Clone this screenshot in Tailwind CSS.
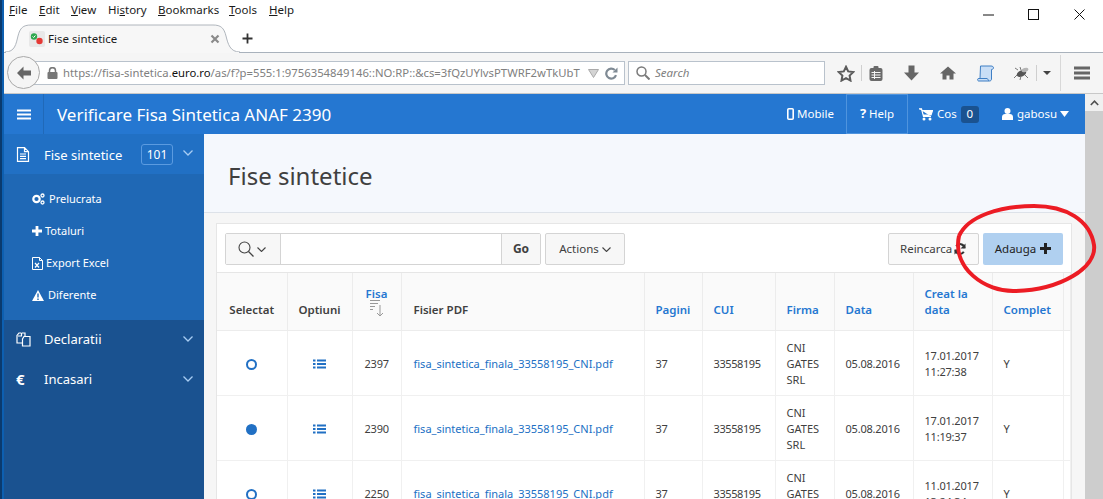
<!DOCTYPE html>
<html lang="en">
  <head>
    <meta charset="UTF-8" />
    <title>Fise sintetice</title>
    <script src="https://cdn.jsdelivr.net/npm/@tailwindcss/browser@4"></script>
  </head>
  <body class="bg-white overflow-hidden">
    <div class="relative w-[1103px] h-[499px] overflow-hidden flex bg-white [font-family:'Noto_Sans',sans-serif] text-[#404040]">
      <!-- desktop edge -->
      <div class="w-[4px] shrink-0 bg-[#0d5fb0] border-l-2 border-[#0a3a6e]"></div>

      <div class="flex-1 flex flex-col min-w-0">
        <!-- menu bar -->
        <div class="h-[18px] flex items-start pl-[5px] pt-[1px] text-[11.5px] leading-[17px] text-[#1a1a1a] relative">
          <span class="w-[30px]"><u>F</u>ile</span>
          <span class="w-[32px]"><u>E</u>dit</span>
          <span class="w-[37px]"><u>V</u>iew</span>
          <span class="w-[50px]">Hi<u>s</u>tory</span>
          <span class="w-[71px]"><u>B</u>ookmarks</span>
          <span class="w-[40px]"><u>T</u>ools</span>
          <span><u>H</u>elp</span>
        </div>

        <!-- tab strip -->
        <div class="h-[35px] relative border-b border-[#a9b2bc] flex items-end">
          <div class="absolute left-[1px] top-[6px] w-[235px] h-[30px]">
            <svg width="235" height="30" viewBox="0 0 235 30" class="absolute inset-0"><path d="M0 28 C10 28 11 20 13 12 C15 4 18 1 26 1 L208 1 C216 1 219 4 221 12 C223 20 225 28 235 28" fill="#f7f7f7" stroke="#b0b6bd"/><path d="M1 29 L234 29" stroke="#f7f7f7" stroke-width="2"/></svg>
            <div class="absolute left-[24px] top-[7px] w-[16px] h-[16px] bg-[#e8e8e8] rounded-[2px]">
              <svg width="16" height="16" viewBox="0 0 16 16"><circle cx="5" cy="5.5" r="3.2" fill="#2fa84f"/><circle cx="10.5" cy="10" r="3.2" fill="#e53935"/><path d="M3.6 5.5l1 1 1.8-2" stroke="#fff" fill="none"/></svg>
            </div>
            <span class="absolute left-[43px] top-[6px] text-[11.5px] leading-[18px] text-[#1a1a1a]">Fise sintetice</span>
            <svg class="absolute left-[205px] top-[10px]" width="10" height="10" viewBox="0 0 10 10"><path d="M1.5 1.5l7 7M8.5 1.5l-7 7" stroke="#8a8a8a" stroke-width="2.2"/></svg>
          </div>
          <svg class="absolute left-[238px] top-[15px]" width="11" height="11" viewBox="0 0 11 11"><path d="M5.5 0.5v10M0.5 5.500h10" stroke="#333" stroke-width="1.800"/></svg>
          <!-- window controls -->
          <svg class="absolute left-[979px] top-[-4px]" width="11" height="2" viewBox="0 0 11 2"><path d="M0 1h11" stroke="#111"/></svg>
          <svg class="absolute left-[1024px] top-[-9px]" width="11" height="11" viewBox="0 0 11 11"><rect x="0.500" y="0.500" width="10" height="10" fill="none" stroke="#111"/></svg>
          <svg class="absolute left-[1070px] top-[-9px]" width="11" height="11" viewBox="0 0 11 11"><path d="M0.500 0.500l10 10M10.500 0.500l-10 10" stroke="#111"/></svg>
        </div>

        <!-- nav toolbar -->
        <div class="h-[41px] shrink-0 bg-[#f5f5f5] border-b border-[#c8c8c8] flex items-center relative">
          <div class="ml-[17px] w-[604px] h-[24px] bg-white border border-[#b9c2cc] flex items-center pl-[25px] pr-[5px] text-[11.3px] text-[#808080] whitespace-nowrap overflow-hidden">
            <svg class="shrink-0" width="11" height="12" viewBox="0 0 11 12"><path d="M2.500 5.500V3.700a3 3 0 0 1 6 0v1.800" fill="none" stroke="#777" stroke-width="1.500"/><rect x="0.500" y="5" width="10" height="7" rx="1" fill="#777"/></svg>
            <span class="ml-[5px] w-[520px] shrink-0">https://fisa-sintetica.<span class="text-[#111]">euro.ro</span>/as/f?p=555:1:9756354849146::NO:RP::&amp;cs=3fQzUYlvsPTWRF2wTkUbT</span>
            <svg class="ml-[5px] shrink-0" width="11" height="9" viewBox="0 0 11 9"><path d="M0.500 0.500h10L5.500 8.500z" fill="#d4d4d4" stroke="#aaa"/></svg>
            <svg class="ml-[6px] shrink-0" width="13" height="13" viewBox="0 0 13 13"><path d="M11 8.200A5 5 0 1 1 9.800 3" fill="none" stroke="#7f8a94" stroke-width="2.200"/><path d="M12.500 0.500v5h-5z" fill="#7f8a94"/></svg>
          </div>
          <div class="absolute left-[3px] top-[3px] w-[33px] h-[33px] rounded-full bg-[#f5f5f5] border border-[#a9a9a9] flex items-center justify-center">
            <svg width="16" height="14" viewBox="0 0 16 14"><path d="M7.500 0.500L1 7l6.500 6.500V9.500H15v-5H7.500z" fill="#666"/></svg>
          </div>
          <div class="ml-[3px] w-[197px] h-[24px] bg-white border border-[#b9c2cc] flex items-center pl-[7px] text-[11.5px] italic text-[#808080]">
            <svg width="14" height="14" viewBox="0 0 14 14"><circle cx="5.500" cy="5.500" r="4.500" fill="none" stroke="#7a7a7a" stroke-width="1.500"/><path d="M9 9l4.500 4.500" stroke="#7a7a7a" stroke-width="2"/></svg>
            <span class="ml-[5px]">Search</span>
          </div>
          <div class="flex items-center ml-[12px]">
            <svg width="18" height="17" viewBox="0 0 18 17"><path d="M9 1.800l2.200 4.600 5 .7-3.600 3.500.9 5L9 13.200l-4.500 2.400.9-5-3.600-3.500 5-.7z" fill="none" stroke="#5c5c5c" stroke-width="2"/></svg>
            <div class="w-px h-[16px] bg-[#cfcfcf] ml-[6px]"></div>
            <svg class="ml-[7px]" width="14" height="15" viewBox="0 0 14 15"><rect x="0.500" y="2" width="13" height="13" rx="2" fill="#6a6a6a"/><rect x="4.500" y="0" width="5" height="3.500" rx="1" fill="#6a6a6a"/><path d="M2.500 6.500h9M2.500 9h9M2.500 11.500h9M5.500 5v8" stroke="#f5f5f5" stroke-width="1"/></svg>
            <svg class="ml-[21px]" width="15" height="16" viewBox="0 0 15 16"><path d="M4.500 0.500h6v7H15L7.500 15.500 0 7.500h4.500z" fill="#666"/></svg>
            <svg class="ml-[21px]" width="16" height="14" viewBox="0 0 16 14"><path d="M8 0.500L0 7.500h2.500v6h4v-4h3v4h4v-6H16z" fill="#666"/></svg>
            <svg class="ml-[21px]" width="17" height="17" viewBox="0 0 17 17"><path d="M3.500 1h10.500c1.300 0 2.500 .6 2.500 1.800 0 1-.8 1.700-2 1.700V14c0 1.200-.8 2-2 2H1.500C.5 16 .2 13.500 1.500 13.500H3z" fill="#c9def6" stroke="#3f7fc4"/><path d="M1.500 13.500h8.500c.8 0 1 1.500 2 2.500" fill="none" stroke="#3f7fc4"/></svg>
            <svg class="ml-[19px]" width="17" height="13" viewBox="0 0 17 13"><ellipse cx="8.500" cy="6.500" rx="5" ry="3" fill="#555" transform="rotate(-25 8.500 6.500)"/><path d="M5 3l-3 -2M4 8L1 11M8 9l-1 4M12 8l3 3M14 2l-3 3M8 3L7 0" stroke="#777"/><ellipse cx="12" cy="3" rx="3.500" ry="2" fill="#b5b5b5" transform="rotate(-20 12 3)"/></svg>
            <div class="w-px h-[16px] bg-[#cfcfcf] ml-[6px]"></div>
            <svg class="ml-[6px]" width="8" height="4" viewBox="0 0 8 4"><path d="M0 0h8L4 4z" fill="#444"/></svg>
            <div class="w-px h-[36px] bg-[#d8d8d8] ml-[9px]"></div>
            <svg class="ml-[13px]" width="16" height="14" viewBox="0 0 16 14"><path d="M0 2h16M0 7h16M0 12h16" stroke="#666" stroke-width="3"/></svg>
          </div>
        </div>

        <!-- app -->
        <div class="flex-1 flex min-h-0">
          <div class="w-[1081px] flex flex-col min-w-0">
            <!-- app header -->
            <div class="h-[40px] shrink-0 bg-[#2577d1] flex items-stretch text-white text-[11.5px]">
              <div class="w-[40px] border-r border-[#2069b8] flex items-center pl-[13px]">
                <svg width="14" height="11" viewBox="0 0 14 11"><path d="M0 1.500h14M0 5.500h14M0 9.500h14" stroke="#fff" stroke-width="2"/></svg>
              </div>
              <div class="pl-[13px] flex items-center text-[17px] leading-none w-[743px] whitespace-nowrap">Verificare Fisa Sintetica ANAF 2390</div>
              <div class="flex items-center w-[59px]">
                <svg width="7" height="12" viewBox="0 0 7 12"><rect x="0.800" y="0.800" width="5.400" height="10.400" rx="1" fill="none" stroke="#fff" stroke-width="1.600"/></svg>
                <span class="ml-[3px]">Mobile</span>
              </div>
              <div class="w-[62px] border border-[#4f94de] flex items-center justify-center">
                <span class="font-bold text-[13px] mr-[3px]">?</span><span>Help</span>
              </div>
              <div class="flex items-center ml-[11px] w-[83px]">
                <svg width="14" height="13" viewBox="0 0 14 13"><path d="M0 0.800h2.500l2 7.700h7.500M3 2.500h10.500l-1.500 4.500H4.300" fill="#fff" stroke="#fff" stroke-width="1.200"/><circle cx="5" cy="11" r="1.500" fill="#fff"/><circle cx="11" cy="11" r="1.500" fill="#fff"/></svg>
                <span class="ml-[4px]">Cos</span>
                <span class="ml-[4px] w-[18px] h-[17px] bg-[#1a5290] rounded-[3px] flex items-center justify-center">0</span>
              </div>
              <div class="flex items-center">
                <svg width="11" height="12" viewBox="0 0 11 12"><circle cx="5.500" cy="3" r="3" fill="#fff"/><path d="M0 12V9c0-2 1.500-3 3-3h5c1.500 0 3 1 3 3v3z" fill="#fff"/></svg>
                <span class="ml-[4px]">gabosu</span>
                <svg class="ml-[3px]" width="9" height="6" viewBox="0 0 9 6"><path d="M0 0h9L4.500 6z" fill="#fff"/></svg>
              </div>
            </div>

            <div class="flex-1 flex min-h-0">
              <!-- sidebar -->
              <div class="w-[200px] shrink-0 bg-[#1a5290] text-white text-[11px]">
                <div class="h-[40px] bg-[#2170c4] flex items-center pl-[12px] relative">
                  <svg width="14" height="15" viewBox="0 0 14 15"><path d="M1.500 0.700h7l4 4v9.600h-11zM8.500 0.700v4h4M4 7h6M4 9.300h6M4 11.600h6" fill="none" stroke="#fff" stroke-width="1.200"/></svg>
                  <span class="ml-[14px] mt-[3px] text-[13px]">Fise sintetice</span>
                  <span class="absolute left-[137px] top-[10px] w-[32px] h-[21px] border border-[#5b9be0] rounded-[3px] flex items-center justify-center text-[12px]">101</span>
                  <svg class="absolute left-[179px] top-[16px]" width="10" height="6" viewBox="0 0 10 6"><path d="M0.500 0.500L5 5l4.500-4.500" fill="none" stroke="#a8cdf3" stroke-width="1.300"/></svg>
                </div>
                <div class="bg-[#1f68b5] py-[9px] pl-[28px]">
                  <div class="h-[32px] flex items-center">
                    <svg width="13" height="12" viewBox="0 0 13 12"><circle cx="4.500" cy="6" r="3.200" fill="none" stroke="#fff" stroke-width="2.200"/><circle cx="10.500" cy="2.500" r="1.500" fill="none" stroke="#fff" stroke-width="1.300"/><circle cx="10.500" cy="9.500" r="1.500" fill="none" stroke="#fff" stroke-width="1.300"/></svg>
                    <span class="ml-[4px]">Prelucrata</span>
                  </div>
                  <div class="h-[32px] flex items-center">
                    <svg width="10" height="10" viewBox="0 0 10 10"><path d="M5 0v10M0 5h10" stroke="#fff" stroke-width="2.800"/></svg>
                    <span class="ml-[3px]">Totaluri</span>
                  </div>
                  <div class="h-[32px] flex items-center">
                    <svg width="11" height="13" viewBox="0 0 11 13"><path d="M0.500 0.500h7l3 3v9h-10zM7.500 0.500v3h3" fill="none" stroke="#fff"/><path d="M3 6l4 4.500M7 6l-4 4.500" stroke="#fff" stroke-width="1.200"/></svg>
                    <span class="ml-[3px]">Export Excel</span>
                  </div>
                  <div class="h-[32px] flex items-center">
                    <svg width="12" height="11" viewBox="0 0 12 11"><path d="M6 0l6 11H0z" fill="#fff"/><path d="M6 3.500v4M6 8.500v1.500" stroke="#1f68b5" stroke-width="1.400"/></svg>
                    <span class="ml-[4px]">Diferente</span>
                  </div>
                </div>
                <div class="h-[40px] flex items-center pl-[12px] relative">
                  <svg class="mb-[2px]" width="15" height="15" viewBox="0 0 15 15"><path d="M5.500 1H3L1 3.500V11h5M5.500 1v3H2M8 4.500h6V14H6.500V7z" fill="none" stroke="#fff" stroke-width="1.200"/><path d="M6 1h3v3" fill="none" stroke="#fff" stroke-width="1.200"/></svg>
                  <span class="ml-[13px] text-[13px]">Declaratii</span>
                  <svg class="absolute left-[179px] top-[16px]" width="10" height="6" viewBox="0 0 10 6"><path d="M0.500 0.500L5 5l4.500-4.500" fill="none" stroke="#a8cdf3" stroke-width="1.300"/></svg>
                </div>
                <div class="h-[40px] flex items-center pl-[12px] relative">
                  <span class="w-[15px] font-bold text-[15px] leading-none mb-[2px]">€</span>
                  <span class="ml-[13px] text-[13px]">Incasari</span>
                  <svg class="absolute left-[179px] top-[16px]" width="10" height="6" viewBox="0 0 10 6"><path d="M0.500 0.500L5 5l4.500-4.500" fill="none" stroke="#a8cdf3" stroke-width="1.300"/></svg>
                </div>
              </div>

              <!-- main -->
              <div class="flex-1 min-w-0 bg-[#f6f6f6]">
                <div class="h-[79px] bg-[#f5f8fd] border-b border-[#dde2e9] flex items-center pl-[24px] pt-[5px] text-[24px] text-[#404040]">Fise sintetice</div>
                <div class="ml-[12px] mt-[10px] w-[856px] bg-white border border-[#e6e6e6] text-[11.5px]">
                  <!-- report toolbar -->
                  <div class="h-[49px] bg-white flex items-start pl-[8px] pt-[9px] border-b border-[#e6e6e6]">
                    <div class="flex h-[32px] w-[316px] border border-[#d4d4d4] rounded-[2px]">
                      <div class="w-[55px] bg-[#f7f7f7] border-r border-[#d4d4d4] flex items-center pl-[12px]">
                        <svg width="16" height="16" viewBox="0 0 16 16"><circle cx="6.500" cy="6.500" r="5.500" fill="none" stroke="#444" stroke-width="1.100"/><path d="M10.500 10.500L15.500 15.500" stroke="#444" stroke-width="1.300"/></svg>
                        <svg class="ml-[3px]" width="9" height="5" viewBox="0 0 9 5"><path d="M0.500 0.500l4 4 4-4" fill="none" stroke="#444" stroke-width="1.100"/></svg>
                      </div>
                      <div class="flex-1 bg-white"></div>
                      <div class="w-[39px] bg-[#f7f7f7] border-l border-[#d4d4d4] flex items-center justify-center font-bold text-[12px]">Go</div>
                    </div>
                    <div class="ml-[4px] w-[80px] h-[32px] bg-[#f7f7f7] border border-[#d4d4d4] rounded-[2px] flex items-center justify-center">
                      <span>Actions</span>
                      <svg class="ml-[3px]" width="9" height="5" viewBox="0 0 9 5"><path d="M0.500 0.500l4 4 4-4" fill="none" stroke="#444" stroke-width="1.100"/></svg>
                    </div>
                    <div class="ml-[263px] w-[91px] h-[32px] bg-[#f9f9f9] border border-[#d4d4d4] rounded-[2px] flex items-center pl-[11px]">
                      <span>Reincarca</span>
                      <svg class="ml-[2px]" width="12" height="12" viewBox="0 0 12 12"><path d="M10.500 5A4.500 4.500 0 0 0 2.200 3.300M1.500 7a4.500 4.500 0 0 0 8.300 1.700" fill="none" stroke="#333" stroke-width="2"/><path d="M11.500 0.500v5h-5zM0.500 11.500v-5h5z" fill="#333"/></svg>
                    </div>
                    <div class="ml-[4px] w-[80px] h-[32px] bg-[#b0d0f0] rounded-[2px] flex items-center justify-center text-[#222]">
                      <span>Adauga</span>
                      <svg class="ml-[4px] mb-[2px]" width="11" height="11" viewBox="0 0 11 11"><path d="M5.500 0v11M0 5.500h11" stroke="#222" stroke-width="3"/></svg>
                    </div>
                  </div>
                  <!-- report table -->
                  <table class="table-fixed border-collapse w-[854px]">
                    <colgroup>
                      <col class="w-[70px]" /><col class="w-[65px]" /><col class="w-[49px]" /><col class="w-[243px]" /><col class="w-[58px]" /><col class="w-[73px]" /><col class="w-[59px]" /><col class="w-[79px]" /><col class="w-[79px]" /><col class="w-[71px]" /><col />
                    </colgroup>
                    <thead class="bg-[#fafafa]">
                      <tr class="h-[57px] text-left [&>th]:align-bottom [&>th]:pb-[12px] [&>th]:border-r [&>th]:border-b [&>th]:border-[#ececec] [&>th]:px-[11px] [&>th]:leading-[16px] [&>th]:font-semibold">
                        <th class="text-[#404040] text-center !px-0">Selectat</th>
                        <th class="text-[#404040] text-center !px-0">Optiuni</th>
                        <th class="text-[#2577d1] text-center !px-0 !pb-[13px]">
                          Fisa
                          <svg class="mx-auto -mt-[2px]" width="16" height="17" viewBox="0 0 16 17"><path d="M1 .5h10M1 3.500h8M1 6.500h5M1 9.500h3" stroke="#999"/><path d="M11 5v11M8 13l3 3 3-3" fill="none" stroke="#999"/></svg>
                        </th>
                        <th class="text-[#404040] !pl-[12px]">Fisier PDF</th>
                        <th class="text-[#2577d1]">Pagini</th>
                        <th class="text-[#2577d1]">CUI</th>
                        <th class="text-[#2577d1]">Firma</th>
                        <th class="text-[#2577d1]">Data</th>
                        <th class="text-[#2577d1]">Creat la data</th>
                        <th class="text-[#2577d1]">Complet</th>
                        <th></th>
                      </tr>
                    </thead>
                    <tbody class="text-[11px] tracking-[-0.2px] [&_td]:border-r [&_td]:border-b [&_td]:border-[#f0f0f0] [&_td]:px-[11px] [&_td]:pt-[3px] [&_td]:leading-[16px]">
                      <tr class="h-[65px]">
                        <td class="!px-0"><div class="mx-auto w-[11px] h-[11px] rounded-full border-2 border-[#2170c4]"></div></td>
                        <td class="!px-0"><svg class="mx-auto" width="13" height="10" viewBox="0 0 13 10"><path d="M0 1.500h2.500M4 1.500h9M0 5h2.500M4 5h9M0 8.500h2.500M4 8.500h9" stroke="#2170c4" stroke-width="2"/></svg></td>
                        <td class="!pl-[12px]">2397</td>
                        <td class="!pl-[12px]"><a class="text-[#2170c4] whitespace-nowrap tracking-normal">fisa_sintetica_finala_33558195_CNI.pdf</a></td>
                        <td>37</td>
                        <td class="!tracking-[-0.4px]">33558195</td>
                        <td class="tracking-normal">CNI GATES SRL</td>
                        <td class="whitespace-nowrap">05.08.2016</td>
                        <td>17.01.2017 11:27:38</td>
                        <td>Y</td>
                        <td></td>
                      </tr>
                      <tr class="h-[65px]">
                        <td class="!px-0"><div class="mx-auto w-[11px] h-[11px] rounded-full bg-[#2170c4]"></div></td>
                        <td class="!px-0"><svg class="mx-auto" width="13" height="10" viewBox="0 0 13 10"><path d="M0 1.500h2.500M4 1.500h9M0 5h2.500M4 5h9M0 8.500h2.500M4 8.500h9" stroke="#2170c4" stroke-width="2"/></svg></td>
                        <td class="!pl-[12px]">2390</td>
                        <td class="!pl-[12px]"><a class="text-[#2170c4] whitespace-nowrap tracking-normal">fisa_sintetica_finala_33558195_CNI.pdf</a></td>
                        <td>37</td>
                        <td class="!tracking-[-0.4px]">33558195</td>
                        <td class="tracking-normal">CNI GATES SRL</td>
                        <td class="whitespace-nowrap">05.08.2016</td>
                        <td>17.01.2017 11:19:37</td>
                        <td>Y</td>
                        <td></td>
                      </tr>
                      <tr class="h-[65px]">
                        <td class="!px-0"><div class="mx-auto w-[11px] h-[11px] rounded-full border-2 border-[#2170c4]"></div></td>
                        <td class="!px-0"><svg class="mx-auto" width="13" height="10" viewBox="0 0 13 10"><path d="M0 1.500h2.500M4 1.500h9M0 5h2.500M4 5h9M0 8.500h2.500M4 8.500h9" stroke="#2170c4" stroke-width="2"/></svg></td>
                        <td class="!pl-[12px]">2250</td>
                        <td class="!pl-[12px]"><a class="text-[#2170c4] whitespace-nowrap tracking-normal">fisa_sintetica_finala_33558195_CNI.pdf</a></td>
                        <td>37</td>
                        <td class="!tracking-[-0.4px]">33558195</td>
                        <td class="tracking-normal">CNI GATES SRL</td>
                        <td class="whitespace-nowrap">05.08.2016</td>
                        <td>11.01.2017 13:24:34</td>
                        <td>Y</td>
                        <td></td>
                      </tr>
                    </tbody>
                  </table>
                </div>
              </div>
            </div>
          </div>

          <!-- scrollbar -->
          <div class="flex-1 bg-[#f0f0f0] flex flex-col">
            <div class="h-[17px] flex items-center justify-center">
              <svg width="9" height="6" viewBox="0 0 9 6"><path d="M0.800 5L4.500 1.200 8.200 5" fill="none" stroke="#505050" stroke-width="1.600"/></svg>
            </div>
            <div class="flex-1 bg-[#cdcdcd]"></div>
          </div>
        </div>
      </div>

      <!-- hand drawn annotation -->
      <svg class="absolute left-0 top-0 pointer-events-none" width="1103" height="499" viewBox="0 0 1103 499">
        <path d="M959 236C968 216 1000 206 1034 206C1066 206 1090 220 1094 245C1097 268 1060 290 1015 291C985 292 952 268 959 236" fill="none" stroke="#ec1c24" stroke-width="4" />
      </svg>
    </div>
  </body>
</html>
